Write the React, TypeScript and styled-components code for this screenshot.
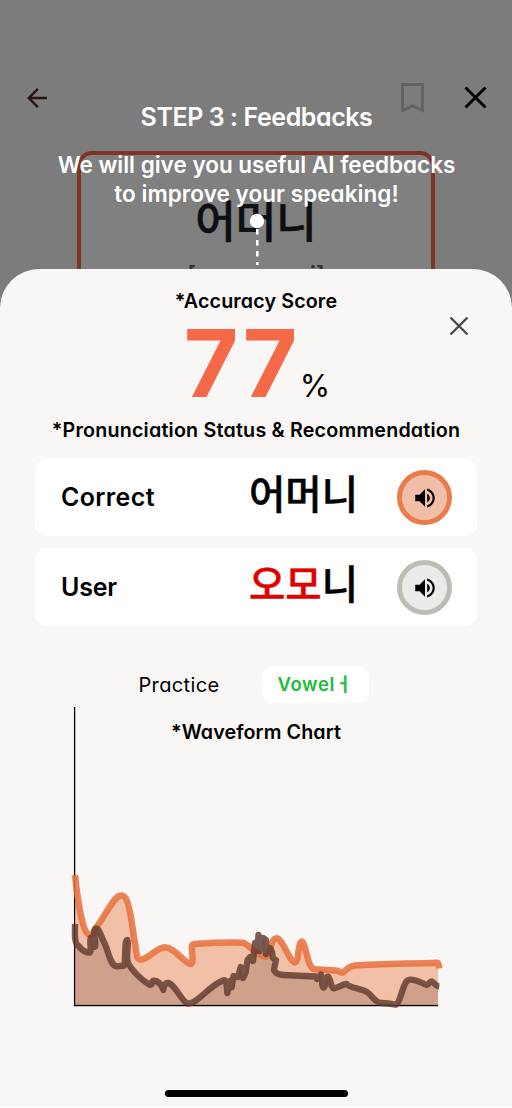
import React from "react";
import styled, { createGlobalStyle } from "styled-components";
import { MdArrowBack } from "react-icons/md";

const GlobalStyle = createGlobalStyle`
  *, *::before, *::after { box-sizing: border-box; }
  body {
    margin: 0;
    background: #fff;
    font-family: Inter, "Noto Sans CJK KR", sans-serif;
    font-feature-settings: "cv11" 1;
    -webkit-font-smoothing: antialiased;
  }
`;

const Screen = styled.main`
  position: relative;
  width: 512px;
  height: 1107px;
  overflow: hidden;
  background: #7c7c7c;
`;

const TopBar = styled.header`
  display: flex;
  align-items: center;
  height: 150.5px;
  padding: 45px 25px 0 22px;
`;

const BackButton = styled.button`
  display: flex;
  margin-right: auto;
  padding: 0;
  border: 0;
  background: none;
  color: #2b1512;
`;

const IconButton = styled.button<{ $gap?: number }>`
  display: flex;
  margin-left: ${(p) => p.$gap ?? 0}px;
  padding: 0;
  border: 0;
  background: none;
`;

const WordCard = styled.section`
  display: flex;
  flex-direction: column;
  align-items: center;
  width: 358px;
  height: 400px;
  margin-left: 77px;
  padding-top: 34px;
  border: 4px solid #803423;
  border-radius: 15px;
  background: #808080;
`;

const CardWord = styled.div`
  font: 500 44px/60px "Noto Sans CJK KR", sans-serif;
  -webkit-text-stroke: 0.6px #0e0f11;
  color: #0e0f11;
`;

const CardRoman = styled.div`
  margin-top: 9px;
  font-size: 23.5px;
  font-weight: 600;
  line-height: 34px;
  color: #333;
`;

const Coach = styled.div`
  position: absolute;
  inset: 0 0 auto 0;
  display: flex;
  flex-direction: column;
  align-items: center;
  padding-top: 102px;
  color: #fff;
  font-weight: 600;
  text-align: center;
`;

const CoachTitle = styled.h1`
  margin: 0 0 0 1px;
  font-size: 25px;
  font-weight: 600;
  line-height: 30px;
  letter-spacing: -0.43px;
`;

const CoachLine = styled.p<{ $top?: number; $track: number }>`
  margin: ${(p) => p.$top ?? 0}px 0 0 1px;
  font-size: 22.5px;
  line-height: 29px;
  letter-spacing: ${(p) => p.$track}px;
  white-space: nowrap;
`;

const Pointer = styled.svg`
  display: block;
  margin: 1px 0 0 2px;
`;

const Sheet = styled.section`
  position: absolute;
  inset: 268.5px 0 0 0;
  display: flex;
  flex-direction: column;
  align-items: center;
  padding-top: 20.5px;
  border-radius: 39px 39px 0 0;
  background: #f8f7f5;
`;

const CloseSheet = styled.button`
  position: absolute;
  top: 47.5px;
  right: 43px;
  display: flex;
  padding: 0;
  border: 0;
  background: none;
`;

const Heading = styled.h2<{ $track: number }>`
  margin: 0;
  font-size: 19.7px;
  font-weight: 600;
  line-height: 24px;
  letter-spacing: ${(p) => p.$track}px;
  white-space: nowrap;
  color: #000;
`;

const Score = styled.div`
  display: flex;
  align-items: baseline;
  height: 105px;
  margin-left: 2px;
`;

const ScoreValue = styled.span`
  font-size: 94px;
  font-weight: 700;
  line-height: 100px;
  letter-spacing: 2.5px;
  color: #f56848;
`;

const ScoreUnit = styled.span`
  margin-left: 0;
  font-size: 31px;
  line-height: 40px;
`;

const Rows = styled.div`
  display: flex;
  flex-direction: column;
  gap: 12px;
  width: 442px;
  margin: 16.4px 0 0 0;
`;

const Row = styled.div`
  display: flex;
  align-items: center;
  height: 78px;
  padding: 0 25.5px 0 26px;
  border-radius: 12px;
  background: #fff;
`;

const RowLabel = styled.span<{ $track: number }>`
  flex: 1;
  font-size: 25px;
  font-weight: 600;
  letter-spacing: ${(p) => p.$track}px;
`;

const RowWord = styled.span`
  margin: 0 38.5px 11px 0;
  font: 500 39.5px/56px "Noto Sans CJK KR", sans-serif;
  -webkit-text-stroke: 0.5px currentColor;
`;

const Wrong = styled.span`
  color: #e00000;
`;

const Speaker = styled.button<{ $ring: string; $fill: string }>`
  display: flex;
  align-items: center;
  justify-content: center;
  width: 55px;
  height: 55px;
  padding: 2px 0 0 2px;
  border: 5.5px solid ${(p) => p.$ring};
  border-radius: 50%;
  background: ${(p) => p.$fill};
`;

const SpeakerGlyph = styled.svg`
  flex: none;
`;

const Practice = styled.div`
  display: flex;
  align-items: center;
  width: 230px;
  height: 37px;
  margin: 40px 0 0 -5px;
`;

const PracticeLabel = styled.span`
  flex: 1;
  font-size: 20px;
  letter-spacing: 0.35px;
`;

const Pill = styled.span`
  display: flex;
  align-items: center;
  width: 107px;
  height: 37px;
  padding: 0 0 1px 16px;
  border-radius: 11px;
  background: #fff;
  color: #1fbb3c;
  font-size: 18.5px;
  font-weight: 600;
  letter-spacing: 0.6px;
`;

const PillVowel = styled.span`
  margin: 0 0 2px;
  font-weight: 500;
  -webkit-text-stroke: 0.5px currentColor;
`;

const ChartArea = styled.figure`
  display: grid;
  width: 512px;
  margin: 0;
  justify-items: center;

  > * { grid-area: 1 / 1; }
`;

const ChartTitle = styled.div`
  padding-top: 17px;
`;

const HomeBar = styled.div`
  width: 183px;
  height: 7px;
  margin: auto 0 10px 1px;
  border-radius: 4px;
  background: #000;
`;

const correctLine =
  "M75 875C77 895 82 930 88 934C93 937 95 929 97 926.500C103 918 108 909 113 902C117 896 122 893 125.500 898C131 906 132 929 135 943C137 954 136 959.500 141 959.500C149 959 156 947.500 165 947.300C175 947.500 183 962 190.700 964C194.500 963 191 951 192 945.500Q192.500 943.700 197 943.700Q220 942.300 243 942.700C250 945 254 953 261.700 955.500C265 957 267.500 958 269 953C271 946 272 938.500 276.700 938.300C283 939 289 961 295 962.500C299 961 298 942 301.700 941.500C306 942 307 969 315 969.300L336 970.500C340 970.500 339 973 343 972.500C347 969 348 966.500 355 965.500C375 964 407 963.700 437 962.700Q439 963 439.300 968.500";

const userLine =
  "M75 924C75 932 74 943 78 945.500C81 948 83 953 90 952.500C92 949 89 941 90.700 938C92 936 93 949 95 946.500C97 941 92 933 95 929C99 926 101 937 104 942C109 952 110 966 117 966.300L124 965.500C126 961 124 940 127.300 940C129.500 943 125 958 128.500 964C132 970 141 980 150 985C153 985 151 980.500 154 980.700Q160 981 163.300 990Q164 983 168.300 982.700C176 985 181 1001 187.500 1003.500C198 1004 207 987 223 980.500Q226 979 226.500 984L227.300 993L230 981L231.700 987.300L233.500 976L238 977L240.700 967L243 978L245.500 973L247.500 960L250 957L253 961L255 943L257 951L258.500 935L259.500 951L263.300 938L266 940L266 954L270 948L272 952L273 958L276 960L274 970Q276 975 284 975L316 976.500L317 979L321 974.500C323 979 321 987.500 324 987.500C326 986 325 976 328.300 976.700C331 980 331 988.500 334 988.300C339 988 342 984 346.500 984C350 988 360 988 367 992C373 996 374 1002 381 1003Q389 1003 396 1004.700C400 1003 402 988 406 982C409 977 418 981 426.700 985C429 985 429 981.500 432 981.500C435 983 435 986 439.300 986.500";

function VolumeIcon() {
  return (
    <SpeakerGlyph width="26" height="26" viewBox="0 0 24 24" fill="#000">
      <path d="M3 9v6h4l5 5V4L7 9H3zm13.500 3c0-1.770-1.020-3.290-2.500-4.030v8.050c1.480-.730 2.500-2.250 2.500-4.020zM14 3.230v2.060c2.890.860 5 3.540 5 6.710s-2.110 5.850-5 6.710v2.060c4.010-.910 7-4.490 7-8.770s-2.990-7.860-7-8.770z" />
    </SpeakerGlyph>
  );
}

function CrossIcon({ size, color, weight }: { size: number; color: string; weight: number }) {
  const far = size - 1.5;
  return (
    <svg width={size} height={size} fill="none" stroke={color} strokeWidth={weight}>
      <path d={`M1.500 1.500L${far} ${far}M${far} 1.500L1.500 ${far}`} />
    </svg>
  );
}

export default function App() {
  return (
    <Screen>
      <GlobalStyle />
      <TopBar>
        <BackButton aria-label="Back">
          <MdArrowBack size={30} />
        </BackButton>
        <IconButton aria-label="Bookmark">
          <svg width="23" height="30" fill="none" stroke="#626262" strokeWidth="3">
            <path d="M1.500 1.500H21.500V27.500L11.500 23L1.500 27.500Z" />
          </svg>
        </IconButton>
        <IconButton aria-label="Close" $gap={40}>
          <CrossIcon size={23} color="#000" weight={2.9} />
        </IconButton>
      </TopBar>
      <WordCard>
        <CardWord>어머니</CardWord>
        <CardRoman>[eo-meo-ni]</CardRoman>
      </WordCard>

      <Coach>
        <CoachTitle>STEP 3 : Feedbacks</CoachTitle>
        <CoachLine $top={18} $track={0}>We will give you useful AI feedbacks</CoachLine>
        <CoachLine $track={0.05}>to improve your speaking!</CoachLine>
        <Pointer width="16" height="56">
          <circle cx="8" cy="12" r="7.200" fill="#fff" />
          <path d="M8.300 20V56" stroke="#fff" strokeWidth="2.600" strokeDasharray="5.500 5.500" />
        </Pointer>
      </Coach>

      <Sheet>
        <CloseSheet aria-label="Close feedback">
          <CrossIcon size={20} color="#49454f" weight={2.3} />
        </CloseSheet>
        <Heading $track={0.12}>*Accuracy Score</Heading>
        <Score>
          <ScoreValue>77</ScoreValue>
          <ScoreUnit>%</ScoreUnit>
        </Score>
        <Heading $track={0.2}>*Pronunciation Status &amp; Recommendation</Heading>
        <Rows>
          <Row>
            <RowLabel $track={0.35}>Correct</RowLabel>
            <RowWord>어머니</RowWord>
            <Speaker $ring="#e97c4a" $fill="#f1bea8" aria-label="Play correct">
              <VolumeIcon />
            </Speaker>
          </Row>
          <Row>
            <RowLabel $track={-0.2}>User</RowLabel>
            <RowWord>
              <Wrong>오모</Wrong>니
            </RowWord>
            <Speaker $ring="#bdbdb6" $fill="#eaeaea" aria-label="Play user">
              <VolumeIcon />
            </Speaker>
          </Row>
        </Rows>
        <Practice>
          <PracticeLabel>Practice</PracticeLabel>
          <Pill>
            Vowel<PillVowel>ㅓ</PillVowel>
          </Pill>
        </Practice>
        <ChartArea>
          <svg width="512" height="308" viewBox="0 703 512 308" fill="none">
            <clipPath id="plot">
              <path d="M75 703H438V1005.500H75Z" />
            </clipPath>
            <path d="M74.600 707V1005.500H438" stroke="#000" strokeWidth="1.300" />
            <g clipPath="url(#plot)">
              <path d={`${correctLine}V1005H75Z`} fill="#e97c4a" fillOpacity="0.450" />
              <path d={`${userLine}V1005H75Z`} fill="#6b4033" fillOpacity="0.250" />
            </g>
            <path d={correctLine} stroke="#e8703c" strokeOpacity="0.850" strokeWidth="6.500" strokeLinejoin="round" />
            <path d={userLine} stroke="#5f3a2f" strokeOpacity="0.820" strokeWidth="6.300" strokeLinejoin="round" />
          </svg>
          <ChartTitle>
            <Heading $track={0.1}>*Waveform Chart</Heading>
          </ChartTitle>
        </ChartArea>
        <HomeBar />
      </Sheet>
    </Screen>
  );
}
